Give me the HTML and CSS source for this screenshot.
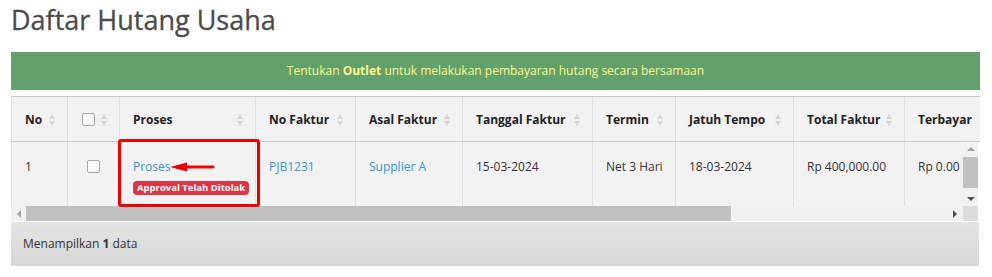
FILE: index.html
```html
<!DOCTYPE html>
<html lang="id">
<head>
    <meta charset="UTF-8">
    <title>Daftar Hutang Usaha</title>
    <link rel="stylesheet" href="styles.css">
</head>
<body>
    <h1 class="page-title">Daftar Hutang Usaha</h1>

    <div class="notice">
        Tentukan <b>Outlet</b> untuk melakukan pembayaran hutang secara bersamaan
    </div>

    <div class="dt-wrap">
        <div class="dt-head">
            <table class="dt-table">
                <colgroup>
                    <col class="w-no"><col class="w-cb"><col class="w-proses"><col class="w-faktur">
                    <col class="w-asal"><col class="w-tgl"><col class="w-termin"><col class="w-jatuh">
                    <col class="w-total"><col class="w-bayar">
                </colgroup>
                <thead>
                    <tr>
                        <th>No<span class="sort"></span></th>
                        <th><span class="check"></span><span class="sort"></span></th>
                        <th>Proses<span class="sort"></span></th>
                        <th>No Faktur<span class="sort"></span></th>
                        <th>Asal Faktur<span class="sort"></span></th>
                        <th>Tanggal Faktur<span class="sort"></span></th>
                        <th>Termin<span class="sort"></span></th>
                        <th>Jatuh Tempo<span class="sort"></span></th>
                        <th>Total Faktur<span class="sort"></span></th>
                        <th>Terbayar<span class="sort"></span></th>
                    </tr>
                </thead>
            </table>
        </div>

        <div class="dt-body">
            <div class="dt-view">
                <table class="dt-table">
                    <colgroup>
                        <col class="w-no"><col class="w-cb"><col class="w-proses"><col class="w-faktur">
                        <col class="w-asal"><col class="w-tgl"><col class="w-termin"><col class="w-jatuh">
                        <col class="w-total"><col class="w-bayar">
                    </colgroup>
                    <tbody>
                        <tr>
                            <td>1</td>
                            <td class="cb-cell"><span class="check"></span></td>
                            <td>
                                <a href="#" class="link">Proses</a><br>
                                <span class="badge">Approval Telah Ditolak</span>
                            </td>
                            <td><a href="#" class="link">PJB1231</a></td>
                            <td><a href="#" class="link">Supplier A</a></td>
                            <td>15-03-2024</td>
                            <td>Net 3 Hari</td>
                            <td>18-03-2024</td>
                            <td>Rp 400,000.00</td>
                            <td>Rp 0.00</td>
                        </tr>
                    </tbody>
                </table>
            </div>
            <div class="vscroll">
                <span class="arr arr-up"></span>
                <span class="vthumb"></span>
                <span class="arr arr-down"></span>
            </div>
            <div class="hscroll">
                <span class="arr arr-left"></span>
                <span class="hthumb"></span>
                <span class="arr arr-right"></span>
            </div>
            <div class="corner"></div>
        </div>

        <div class="dt-foot">Menampilkan <b>1</b> data</div>

        <!-- penanda -->
        <div class="mark-box"></div>
        <svg class="mark-arrow" width="46" height="12" viewBox="0 0 46 12">
            <path d="M14 6 H43" stroke="#ee0000" stroke-width="3" stroke-linecap="round"/>
            <path d="M0 6 L17 1.5 L17 10.5 Z" fill="#ee0000"/>
        </svg>
    </div>
</body>
</html>
```

FILE: styles.css
```css
body {
    margin: 0;
    padding: 0 12px 0 11px;
    font-family: "Open Sans", "Noto Sans", sans-serif;
    font-size: 12px;
    color: #333;
    background: #fff;
}

.page-title {
    margin: 2px 0 14px;
    font-size: 27px;
    font-weight: 400;
    line-height: 36px;
    color: #4b4b4b;
    -webkit-text-stroke: 0.3px #4b4b4b;
}

.notice {
    height: 38px;
    line-height: 38px;
    margin-bottom: 6px;
    text-align: center;
    background-color: #62a16b;
    color: #fff68a;
}

.dt-wrap {
    position: relative;
}

.dt-head {
    overflow: hidden;
    background: #f2f2f2;
    border-top: 1px solid #c4c8cc;
}

.dt-table {
    border-collapse: collapse;
    table-layout: fixed;
    width: 1033px;
}

.w-no { width: 56px; }
.w-cb { width: 52px; }
.w-proses { width: 136px; }
.w-faktur { width: 100px; }
.w-asal { width: 107px; }
.w-tgl { width: 130px; }
.w-termin { width: 83px; }
.w-jatuh { width: 118px; }
.w-total { width: 111px; }
.w-bayar { width: 140px; }

.dt-table th {
    position: relative;
    padding: 13px 26px 11px 13px;
    line-height: 20px;
    text-align: left;
    font-weight: 700;
    color: #222;
    white-space: nowrap;
    border-left: 1px solid #dcdfe3;
    border-bottom: 1px solid #c9cdd2;
}

.sort {
    position: absolute;
    right: 11px;
    top: 17px;
    width: 7px;
    height: 12px;
}

.sort::before,
.sort::after {
    content: "";
    position: absolute;
    left: 0;
    border-left: 3.5px solid transparent;
    border-right: 3.5px solid transparent;
}

.sort::before {
    top: 0;
    border-bottom: 5px solid #d4d4d4;
}

.sort::after {
    bottom: 0;
    border-top: 5px solid #d4d4d4;
}

.check {
    display: inline-block;
    width: 11px;
    height: 11px;
    border: 1px solid #a9a9a9;
    border-radius: 2px;
    background: #fafafa;
    vertical-align: middle;
}

.dt-table th .check {
    margin-left: 1px;
    margin-top: -2px;
}

.dt-body {
    display: grid;
    grid-template-columns: 1fr 15px;
    grid-template-rows: 64px 15px;
    padding-right: 2px;
}

.dt-view {
    overflow: hidden;
    background: #f2f2f2;
}

.dt-table td {
    height: 36px;
    padding: 15px 13px 13px;
    line-height: 20px;
    vertical-align: top;
    white-space: nowrap;
    border-left: 1px solid #dcdfe3;
}

.cb-cell {
    padding-left: 19px !important;
}

.cb-cell .check {
    margin-top: -3px;
}

.link {
    color: #2e9ad8;
    text-decoration: none;
}

.badge {
    display: inline-block;
    margin-top: 1px;
    padding: 0 4px;
    border-radius: 4px;
    background: #dc3545;
    color: #fff;
    font-size: 9.5px;
    font-weight: 700;
    line-height: 14px;
}

.vscroll {
    display: flex;
    flex-direction: column;
    align-items: center;
    background: #f1f1f1;
}

.vthumb {
    width: 15px;
    height: 31px;
    margin: 6px 0 auto;
    background: #c1c1c1;
}

.hscroll {
    display: flex;
    align-items: center;
    background: #f1f1f1;
}

.hthumb {
    width: 705px;
    height: 15px;
    margin-left: 5px;
    margin-right: auto;
    background: #c1c1c1;
}

.corner {
    background: #dcdcdc;
}

.arr {
    width: 0;
    height: 0;
    flex: none;
}

.arr-up {
    margin-top: 5px;
    border-left: 4px solid transparent;
    border-right: 4px solid transparent;
    border-bottom: 4px solid #a3a3a3;
}

.arr-down {
    margin-bottom: 5px;
    border-left: 4px solid transparent;
    border-right: 4px solid transparent;
    border-top: 4px solid #505050;
}

.arr-left {
    margin-left: 6px;
    border-top: 4px solid transparent;
    border-bottom: 4px solid transparent;
    border-right: 4px solid #a3a3a3;
}

.arr-right {
    margin-right: 6px;
    border-top: 4px solid transparent;
    border-bottom: 4px solid transparent;
    border-left: 4px solid #505050;
}

.dt-foot {
    height: 44px;
    margin-top: 1px;
    margin-right: 1px;
    padding: 0 12px;
    line-height: 44px;
    color: #333;
    background: linear-gradient(to bottom, #e4e4e4, #d7d7d7);
}

.mark-box {
    position: absolute;
    left: 107px;
    top: 43px;
    width: 136px;
    height: 62px;
    border: 3px solid #ee0000;
    border-radius: 3px;
}

.mark-arrow {
    position: absolute;
    left: 159px;
    top: 65px;
}
```
